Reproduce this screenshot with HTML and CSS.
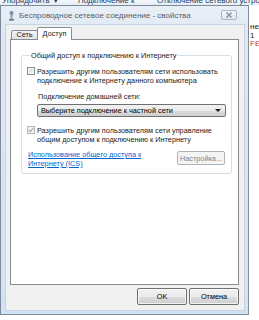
FILE: index.html
```html
<!DOCTYPE html>
<html>
<head>
<meta charset="utf-8">
<link rel="stylesheet" href="styles.css">
</head>
<body>
<div class="screen">
  <div class="toolbar">
    <span class="tb-item tb-first">Упорядочить ▼</span>
    <span class="tb-item tb-second">Подключение к</span>
    <span class="tb-item">Отключение сетевого устро</span>
  </div>
  <div class="desk">
    <div class="window">
      <div class="titlebar">
        <svg class="ticon" width="7" height="10" viewBox="0 0 7 10">
          <rect x="2" y="0.5" width="3" height="3" rx="1" fill="#7f9bbd" stroke="#4f6b8f" stroke-width="0.6"/>
          <rect x="2.6" y="3.2" width="1.8" height="5" fill="#8d9aa8"/>
          <rect x="1" y="8" width="5" height="1.6" fill="#6b7886"/>
        </svg>
        <span class="title">Беспроводное сетевое соединение - свойства</span>
        <div class="close">
          <svg width="16" height="10" viewBox="0 0 16 10">
            <path d="M5.5 2.5 L10.5 7.5 M10.5 2.5 L5.5 7.5" stroke="#8a96a3" stroke-width="1.6"/>
          </svg>
        </div>
      </div>
      <div class="dialog">
        <div class="tabs">
          <div class="tab">Сеть</div>
          <div class="tab active">Доступ</div>
        </div>
        <div class="panel">
          <fieldset class="group">
            <legend>Общий доступ к подключению к Интернету</legend>
            <div class="check-row first-row">
              <span class="cb"></span>
              <span class="cb-label">Разрешить другим пользователям сети использовать<br>подключение к Интернету данного компьютера</span>
            </div>
            <div class="home-label">Подключение домашней сети:</div>
            <div class="combo">
              <span>Выберите подключение к частной сети</span>
              <span class="arrow"></span>
            </div>
            <div class="check-row second-row">
              <span class="cb cb-dis">
                <svg width="6" height="6" viewBox="0 0 6 6"><path d="M0.8 3 L2.4 4.7 L5.3 1" fill="none" stroke="#a7a7a7" stroke-width="1.2"/></svg>
              </span>
              <span class="cb-label">Разрешить другим пользователям сети управление<br>общим доступом к подключению к Интернету</span>
            </div>
            <div class="link-row">
              <a class="link">Использование общего доступа к<br>Интернету (ICS)</a>
              <div class="btn btn-dis">Настройка...</div>
            </div>
          </fieldset>
        </div>
        <div class="buttons">
          <div class="btn">OK</div>
          <div class="btn">Отмена</div>
        </div>
      </div>
    </div>
    <div class="side">
      <span>не</span>
      <span>1</span>
      <span class="side-red">FE</span>
    </div>
  </div>
</div>
</body>
</html>
```

FILE: styles.css
```css
* { box-sizing: border-box; }
html, body { margin: 0; padding: 0; background: #ffffff; }
.screen {
  width: 259px;
  height: 320px;
  overflow: hidden;
  background: #ffffff;
  font-family: "Liberation Sans", Arial, sans-serif;
  font-size: 7.3px;
  color: #1b1b1b;
  display: flex;
  flex-direction: column;
}
.toolbar {
  height: 5px;
  flex: none;
  display: flex;
  align-items: flex-end;
  overflow: hidden;
  padding-left: 2px;
  background: linear-gradient(#f4f8fc, #e3ebf5);
  color: #1e395b;
  font-size: 8px;
}
.tb-item { line-height: 9px; white-space: nowrap; flex: none; }
.tb-first { width: 76px; }
.tb-second { width: 79px; }
.desk { display: flex; height: 310px; flex: none; }
.window {
  width: 249px;
  height: 310px;
  flex: none;
  border: 1px solid #7f8b99;
  background: linear-gradient(#e9eff6 0px, #dde8f4 30px, #d3e2f2 100%);
  display: flex;
  flex-direction: column;
}
.titlebar {
  height: 19px;
  flex: none;
  display: flex;
  align-items: center;
  padding-left: 7px;
}
.ticon { flex: none; margin-top: 1px; }
.title {
  margin-left: 4px;
  font-size: 8px;
  color: #5a5f66;
  white-space: nowrap;
}
.close {
  margin-left: auto;
  margin-right: 11px;
  align-self: flex-start;
  margin-top: 4px;
  width: 16px;
  height: 10px;
  border: 1px solid #a9b4c0;
  border-radius: 2px;
  background: linear-gradient(#f3f6f9, #dfe6ee);
  display: flex;
  align-items: center;
  justify-content: center;
}
.close svg { display: block; margin: -1px; }
.dialog {
  flex: 1;
  margin: 0 4px 4px 5px;
  background: #f0f0f0;
  display: flex;
  flex-direction: column;
  padding: 2px 5px 5px 4px;
  box-shadow: 0 0 0 1px #c7d5e3;
}
.tabs {
  height: 13px;
  flex: none;
  display: flex;
  align-items: flex-end;
  margin-bottom: -1px;
  position: relative;
  z-index: 1;
  padding-left: 1px;
}
.tab {
  height: 10px;
  width: 27px;
  border: 1px solid #898c95;
  border-radius: 2px 2px 0 0;
  background: linear-gradient(#f3f3f3, #e3e3e3);
  display: flex;
  align-items: center;
  justify-content: center;
  line-height: 8px;
}
.tab.active {
  height: 13px;
  width: 35px;
  margin-left: -1px;
  background: #ffffff;
  border-bottom: none;
  padding-bottom: 1px;
}
.panel {
  flex: 1;
  border: 1px solid #898c95;
  background: #ffffff;
  padding: 11px 7px 0 10px;
}
.group {
  margin: 0;
  width: 210px;
  border: 1px solid #d5dfe5;
  border-radius: 3px;
  padding: 0 5px 5px 5px;
}
.group legend {
  padding: 0 1px;
  margin-left: 3px;
  line-height: 9px;
}
.check-row { display: flex; line-height: 9px; }
.first-row { margin-top: 7px; }
.second-row { margin-top: 9px; }
.cb {
  flex: none;
  width: 8px;
  height: 8px;
  margin-right: 2px;
  border: 1px solid #8e8f8f;
  background: linear-gradient(135deg, #cfd3d9, #f7f7f7);
  box-shadow: inset 0 0 0 1px #f4f4f4;
}
.cb-dis {
  border-color: #b4b4b4;
  background: #f4f4f4;
  box-shadow: none;
  display: flex;
  align-items: center;
  justify-content: center;
}
.cb-dis svg { display: block; }
.cb-label { white-space: nowrap; }
.home-label { margin-top: 7px; margin-left: 11px; line-height: 9px; }
.combo {
  margin-top: 3px;
  margin-left: 10px;
  width: 189px;
  height: 13px;
  border: 1px solid #707070;
  border-radius: 2px;
  background: linear-gradient(#f2f2f2 0%, #ebebeb 50%, #dddddd 50%, #cfcfcf 100%);
  display: flex;
  align-items: center;
  padding: 0 4px 0 3px;
  line-height: 9px;
  color: #000;
}
.arrow {
  margin-left: auto;
  width: 0;
  height: 0;
  border-left: 3px solid transparent;
  border-right: 3px solid transparent;
  border-top: 3px solid #1a1a1a;
}
.link-row {
  margin-top: 6px;
  display: flex;
  justify-content: space-between;
  align-items: flex-start;
  line-height: 9px;
}
.link {
  margin-left: 1px;
  color: #0066cc;
  text-decoration: underline;
  white-space: nowrap;
}
.btn {
  height: 17px;
  width: 50px;
  border: 1px solid #707070;
  border-radius: 2px;
  background: linear-gradient(#f2f2f2 0%, #ebebeb 50%, #dddddd 50%, #cfcfcf 100%);
  box-shadow: inset 0 0 0 1px rgba(255,255,255,0.7);
  display: flex;
  align-items: center;
  justify-content: center;
  color: #000;
}
.btn-dis {
  margin-top: 1px;
  margin-right: 1px;
  height: 14px;
  width: 48px;
  border-color: #adb2b5;
  background: #f4f4f4;
  box-shadow: none;
  color: #838383;
}
.buttons {
  flex: none;
  margin-top: 3px;
  display: flex;
  justify-content: flex-end;
  gap: 2px;
}
.side {
  width: 10px;
  flex: none;
  display: flex;
  flex-direction: column;
  padding-top: 18px;
  padding-left: 1px;
  font-size: 8px;
  line-height: 8.5px;
  color: #1b1b1b;
  overflow: hidden;
  white-space: nowrap;
}
.side-red { color: #b83a2e; }
```
